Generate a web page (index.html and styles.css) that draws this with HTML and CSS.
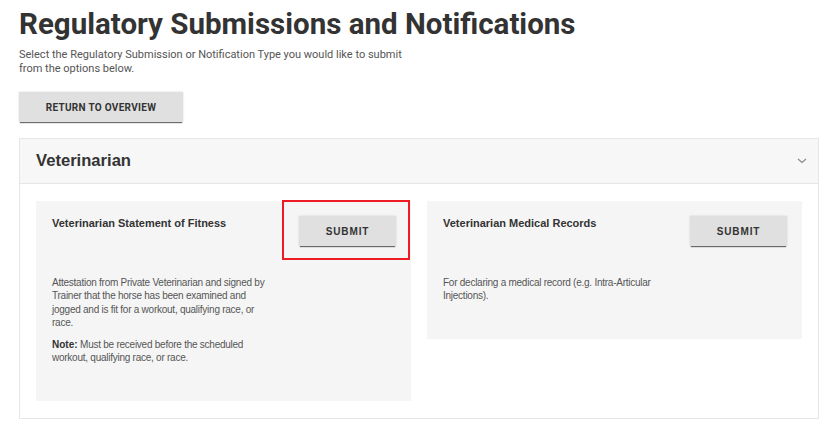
FILE: index.html
```html
<!DOCTYPE html>
<html lang="en">
<head>
    <meta charset="UTF-8">
    <meta name="viewport" content="width=device-width, initial-scale=1.0">
    <title>Regulatory Submissions and Notifications</title>
    <link rel="stylesheet" href="styles.css">
</head>
<body>
    <div class="page">
        <h1 class="page-title">Regulatory Submissions and Notifications</h1>
        <p class="intro">Select the Regulatory Submission or Notification Type you would like to submit<br>from the options below.</p>

        <button class="btn btn-return" type="button">Return to Overview</button>

        <div class="panel">
            <div class="panel-header">
                <h2>Veterinarian</h2>
                <svg class="chevron" width="10" height="6" viewBox="0 0 10 6">
                    <path d="M1 1 L5 4.5 L9 1" fill="none" stroke="#8a8a8a" stroke-width="1.2"/>
                </svg>
            </div>

            <div class="panel-body">
                <div class="card">
                    <div class="card-top">
                        <h3>Veterinarian Statement of Fitness</h3>
                        <span class="highlight-wrap">
                            <button class="btn btn-submit" type="button">Submit</button>
                            <span class="highlight"></span>
                        </span>
                    </div>
                    <div class="card-text">
                        <p>Attestation from Private Veterinarian and signed by Trainer that the horse has been examined and jogged and is fit for a workout, qualifying race, or race.</p>
                        <p><strong>Note:</strong> Must be received before the scheduled workout, qualifying race, or race.</p>
                    </div>
                </div>

                <div class="card">
                    <div class="card-top">
                        <h3>Veterinarian Medical Records</h3>
                        <button class="btn btn-submit" type="button">Submit</button>
                    </div>
                    <div class="card-text">
                        <p>For declaring a medical record (e.g. Intra&#8209;Articular Injections).</p>
                    </div>
                </div>
            </div>
        </div>
    </div>
</body>
</html>
```

FILE: styles.css
```css
body {
    margin: 0;
    background-color: #fff;
    font-family: Roboto, "Liberation Sans", Arial, sans-serif;
    color: #333;
}

.page {
    padding: 6px 16px 0 19px;
}

.page-title {
    margin: 0;
    font-size: 29.5px;
    line-height: 36px;
    font-weight: 700;
    color: #333;
}

.intro {
    margin: 6px 0 0;
    font-size: 11px;
    line-height: 14px;
    color: #555;
}

.btn {
    border: none;
    background-color: #e0e0e0;
    color: #333;
    text-transform: uppercase;
    font-weight: 700;
    cursor: pointer;
    box-shadow: 0 2px 1px -1px rgba(0,0,0,0.55), 0 0 2px rgba(0,0,0,0.15);
}

.btn-return {
    display: block;
    margin-top: 16px;
    width: 164px;
    height: 30px;
    font-family: Roboto, sans-serif;
    font-size: 10px;
    letter-spacing: 0.3px;
}

.panel {
    margin-top: 16px;
    border: 1px solid #e6e6e6;
    font-family: "Liberation Sans", Arial, sans-serif;
}

.panel-header {
    display: flex;
    align-items: center;
    justify-content: space-between;
    height: 44px;
    padding: 0 11px 0 16px;
    background-color: #f7f7f7;
    border-bottom: 1px solid #e6e6e6;
}

    .panel-header h2 {
        margin: 0;
        font-size: 16.6px;
        font-weight: 700;
        color: #333;
    }

.panel-body {
    display: grid;
    grid-template-columns: 1fr 1fr;
    gap: 16px;
    align-items: start;
    padding: 17px 16px;
}

.card {
    background-color: #f5f5f5;
    padding: 15px 15px 36px 16px;
}

.card-top {
    display: flex;
    justify-content: space-between;
    align-items: flex-start;
}

    .card-top h3 {
        margin: 0;
        font-size: 11px;
        line-height: 14px;
        font-weight: 700;
        color: #333;
    }

.btn-submit {
    width: 97px;
    height: 30px;
    font-family: "Liberation Sans", Arial, sans-serif;
    font-size: 10px;
    letter-spacing: 0.9px;
}

.highlight-wrap {
    position: relative;
    display: block;
}

/* annotation box round the first submit button */
.highlight {
    position: absolute;
    top: -16px;
    left: -17px;
    right: -14px;
    bottom: -14px;
    border: 2px solid #ed1c24;
    pointer-events: none;
}

.card-text {
    margin-top: 30px;
    width: 222px;
    font-size: 10px;
    letter-spacing: -0.25px;
    line-height: 13.3px;
    color: #555;
}

    .card-text p {
        margin: 0;
    }

        .card-text p + p {
            margin-top: 9px;
        }

    .card-text strong {
        color: #333;
        letter-spacing: 0;
    }
```
